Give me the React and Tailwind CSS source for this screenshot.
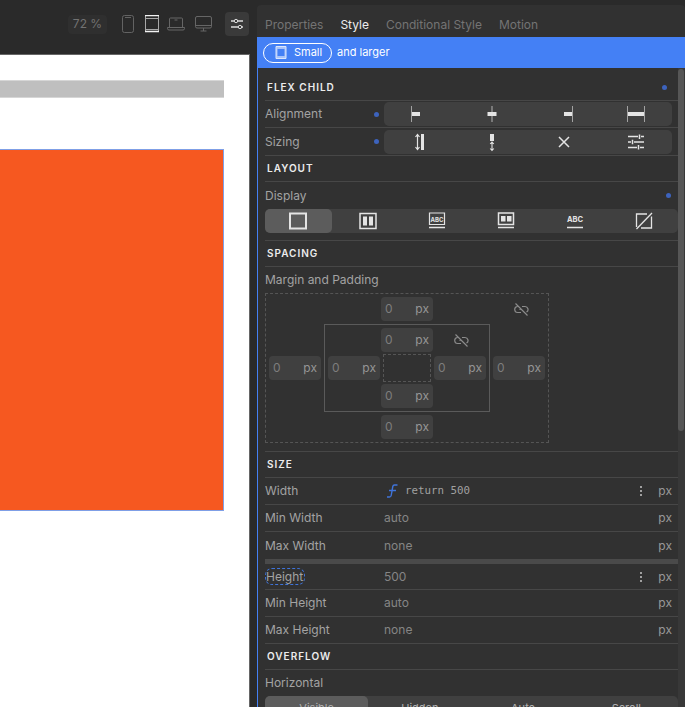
const Svg = ({ w = 20, h = 20, children, className = 'text-[#e4e4e4]' }) => (
  <svg width={w} height={h} viewBox={`0 0 ${w} ${h}`} fill="none" stroke="currentColor" className={className}>
    {children}
  </svg>
);

const alignIcons = [
  <Svg><path d="M1.500 2v16" strokeOpacity=".6" /><path d="M2 8h8v4H2z" fill="currentColor" stroke="none" /></Svg>,
  <Svg><path d="M10 2v16" strokeOpacity=".7" /><path d="M5.500 8h9v4h-9z" fill="currentColor" stroke="none" /></Svg>,
  <Svg><path d="M18.500 2v16" strokeOpacity=".6" /><path d="M10 8h8v4h-8z" fill="currentColor" stroke="none" /></Svg>,
  <Svg><path d="M1.500 2v16M18.500 2v16" strokeOpacity=".6" /><path d="M2 8h16v4H2z" fill="currentColor" stroke="none" /></Svg>,
];

const sizingIcons = [
  <Svg><path d="M7.500 2.500v15M5.500 5l2-2.500L9.500 5M5.500 15l2 2.500 2-2.500" strokeWidth="1.200" /><path d="M11 2h3v16h-3z" fill="currentColor" stroke="none" /></Svg>,
  <Svg><path d="M8 2h4v7h-4z" fill="currentColor" stroke="none" /><path d="M10 10v8.500M8.200 12L10 10l1.800 2M8.200 16.500l1.800 2 1.800-2" strokeWidth="1.100" /></Svg>,
  <Svg><path d="M5 5l10 10M15 5L5 15" strokeWidth="1.500" /></Svg>,
  <Svg><path d="M2 4.500h10M15 4.500h3M2 10h3M8 10h10M2 15.500h9M14 15.500h4M13.500 2.500v4.500M6.500 7.700v4.600M12.500 13v4.500" strokeWidth="1.500" /></Svg>,
];

const displayIcons = [
  <Svg w={18} h={18}><path d="M1 1.500h16v15H1z" strokeWidth="2" /></Svg>,
  <Svg w={18} h={18}><path d="M1 1.500h16v15H1z" strokeWidth="1.500" /><path d="M4 4.500h4v9H4zM10 4.500h4v9h-4z" fill="currentColor" stroke="none" /></Svg>,
  <Svg w={18} h={18}><path d="M1.500 1h15v11.500h-15z" strokeWidth="1.200" /><path d="M1 15.500h16" strokeWidth="1.500" /><text x="9" y="9.500" textAnchor="middle" fontSize="6" fontWeight="700" fill="currentColor" stroke="none" fontFamily="Inter">ABC</text></Svg>,
  <Svg w={18} h={18}><path d="M1.500 1h15v11.500h-15z" strokeWidth="1.500" /><path d="M4 4h4.500v5.500H4zM10 4h4.500v5.500H10z" fill="currentColor" stroke="none" /><path d="M1 15.500h16" strokeWidth="1.500" /></Svg>,
  <Svg w={18} h={18}><path d="M1 15.500h16" strokeWidth="1.500" /><text x="9" y="10" textAnchor="middle" fontSize="7.500" fontWeight="700" fill="currentColor" stroke="none" fontFamily="Inter">ABC</text></Svg>,
  <Svg w={18} h={18}><path d="M12 2H1.500v13M6 16h10.500V4.500" strokeWidth="1.300" /><path d="M1.500 17L17 1" strokeWidth="1.300" /></Svg>,
];

function Dot({ className = '' }) {
  return <span className={`w-[5px] h-[5px] rounded-full bg-[#3d63bd] shrink-0 ${className}`} />;
}

function Heading({ title, dot, className = 'h-[26px]' }) {
  return (
    <div className={`${className} flex items-center justify-between pl-[2px] pr-[11px] border-b border-[#474747]`}>
      <span className="text-[10px] font-semibold tracking-[0.1em] text-[#ececec]">{title}</span>
      {dot && <Dot />}
    </div>
  );
}

function IconRow({ label, icons, className = 'h-[27px]' }) {
  return (
    <div className={`${className} flex items-center border-b border-[#474747]`}>
      <span className="w-[109px] text-[12px] text-[#a3a3a3]">{label}</span>
      <Dot className="mr-[5px]" />
      <div className="w-[288px] h-[24px] grid grid-cols-4 bg-[#404040] rounded-[5px]">
        {icons.map((icon, i) => (
          <div key={i} className="flex items-center justify-center">{icon}</div>
        ))}
      </div>
    </div>
  );
}

function SizeRow({ label, value, menu, border = true, className = 'h-[27px]', labelClass = '', children }) {
  return (
    <div className={`${className} flex items-center text-[12px] ${border ? 'border-b border-[#474747]' : ''}`}>
      <span className="w-[119px] shrink-0"><span className={`text-[#a3a3a3] ${labelClass}`}>{label}</span></span>
      <div className="flex-1 text-[#858585]">{children || value}</div>
      {menu && (
        <span className="flex flex-col gap-[2px] mr-[16px]">
          <i className="w-[2px] h-[2px] bg-[#a0a0a0]" />
          <i className="w-[2px] h-[2px] bg-[#a0a0a0]" />
          <i className="w-[2px] h-[2px] bg-[#a0a0a0]" />
        </span>
      )}
      <span className="text-[#999] mr-[6px]">px</span>
    </div>
  );
}

function PxInput() {
  return (
    <div className="w-[52px] h-[24px] shrink-0 bg-[#404040] rounded-[4px] flex items-center justify-between px-[4px] text-[12px]">
      <span className="text-[#7d7d7d]">0</span>
      <span className="text-[#969696]">px</span>
    </div>
  );
}

const LinkOff = () => (
  <svg width="15" height="13" viewBox="0 0 15 13" fill="none" stroke="#8c8c8c" strokeWidth="1.200">
    <path d="M1.500.5l12 12M3.500 3.500a3 3 0 00.500 6h3M8 3.500h3a3 3 0 011.500 5.600M5.500 6.500h1" />
  </svg>
);

export default function App() {
  return (
    <div className="w-[685px] h-[707px] flex overflow-hidden bg-[#2a2a2a] font-[Inter,sans-serif]">
      <div className="w-[257px] shrink-0 flex flex-col">
        <div className="h-[54px] shrink-0 flex items-center pl-[68px] pr-[8px] pb-[6px]">
          <div className="w-[39px] h-[19px] rounded-[4px] bg-[#2f2f2f] text-[#727272] text-[12px] flex items-center justify-center">72 %</div>
          <div className="ml-[15px]">
            <Svg w={12} h={18} className="text-[#636363]"><rect x=".5" y=".5" width="11" height="17" rx="2" /><path d="M3 2.500h6" /></Svg>
          </div>
          <div className="ml-[11px]">
            <Svg w={14} h={18} className="text-[#a8a8a8]"><path d="M.5 1v16M13.500 1v16M1 3.500h12M1 14.500h12" /><path d="M0 .5h14M0 16.500h14" stroke="#f2f2f2" strokeWidth="1.300" /></Svg>
          </div>
          <div className="ml-[8px]">
            <Svg w={18} h={14} className="text-[#666]"><path d="M2.500 10V2a1 1 0 011-1h11a1 1 0 011 1v8" /><path d="M.5 10.500h17v1a1.500 1.500 0 01-1.500 1.500H2a1.500 1.500 0 01-1.500-1.500z" /><path d="M7.500 3h3" /></Svg>
          </div>
          <div className="ml-[10px]">
            <Svg w={17} h={16} className="text-[#666]"><rect x=".5" y=".5" width="16" height="11.500" rx="1.500" /><path d="M.5 9.500h16M8.500 12v3M5.500 15h6" /></Svg>
          </div>
          <div className="ml-[13px] w-[24px] h-[24px] rounded-[4px] bg-[#3a3a3a] flex items-center justify-center">
            <Svg w={14} h={14} className="text-[#dcdcdc]"><path d="M1 4h3M8 4h5M1 10h7M12 10h1" strokeWidth="1.300" /><circle cx="6" cy="4" r="1.700" /><circle cx="10" cy="10" r="1.700" /></Svg>
          </div>
        </div>
        <div className="w-[250px] flex-1 bg-white border-t border-r border-[#666] pt-[25px] pr-[25px]">
          <div className="h-[18px] bg-[#bfbfbf] border-y border-[#d6d6d6]" />
          <div className="mt-[51px] h-[362px] bg-[#f65820] border border-l-0 border-[#7f9fe6]" />
        </div>
      </div>

      <div className="mt-[5px] w-[428px] shrink-0 bg-[#313131] rounded-t-[4px] flex flex-col">
        <div className="h-[32px] shrink-0 flex items-center gap-[17px] pl-[8px] pt-[7px] text-[12px] text-[#747474]">
          <span>Properties</span>
          <span className="text-[#ededed]">Style</span>
          <span>Conditional Style</span>
          <span>Motion</span>
        </div>
        <div className="h-[31px] shrink-0 bg-[#4480f5] flex items-center pl-[6px] text-white text-[11px]">
          <div className="w-[69px] h-[20px] rounded-full border border-white flex items-center pl-[11px] gap-[7px]">
            <Svg w={12} h={13} className="text-[#dbe6fd]"><path d="M1 .5h10v12H1z" fill="#a9c4fa" /><path d="M2.500 3h7v7h-7z" fill="#4480f5" stroke="none" /></Svg>
            <span>Small</span>
          </div>
          <span className="ml-[5px]">and larger</span>
        </div>
        <div className="flex-1 min-h-0 flex border-l border-[#4480f5] overflow-hidden">
          <div className="w-[413px] shrink-0 ml-[7px]">
            <Heading title="FLEX CHILD" dot className="h-[33px] pt-[7px]" />
            <IconRow label="Alignment" icons={alignIcons} />
            <IconRow label="Sizing" icons={sizingIcons} className="h-[28px]" />

            <Heading title="LAYOUT" />
            <div className="h-[59px] border-b border-[#474747]">
              <div className="h-[27px] flex items-center justify-between pr-[7px] text-[12px] text-[#a3a3a3]">
                <span>Display</span>
                <Dot />
              </div>
              <div className="h-[24px] grid grid-cols-6 bg-[#404040] rounded-[5px]">
                {displayIcons.map((icon, i) => (
                  <div key={i} className={`flex items-center justify-center rounded-[5px] ${i === 0 ? 'bg-[#5c5c5c] mr-[2px]' : ''}`}>{icon}</div>
                ))}
              </div>
            </div>

            <Heading title="SPACING" />
            <div className="h-[185px] border-b border-[#474747]">
              <div className="h-[26px] flex items-center text-[12px] text-[#a3a3a3]">Margin and Padding</div>
              <div className="w-[284px] h-[150px] border border-dashed border-[#555] p-[3px] grid grid-cols-[52px_166px_52px] grid-rows-[24px_88px_24px] gap-[3px]">
                <div />
                <div className="flex justify-center"><PxInput /></div>
                <div className="flex items-center justify-center pl-[4px]"><LinkOff /></div>
                <div className="flex items-center"><PxInput /></div>
                <div className="border border-[#5a5a5a] p-[3px] grid grid-cols-[52px_48px_52px] grid-rows-[24px_28px_24px] gap-x-[3px] gap-y-[2px]">
                  <div />
                  <div className="flex justify-center"><PxInput /></div>
                  <div className="flex items-center justify-center pl-[3px]"><LinkOff /></div>
                  <div className="flex items-center"><PxInput /></div>
                  <div className="border border-dashed border-[#555]" />
                  <div className="flex items-center"><PxInput /></div>
                  <div />
                  <div className="flex justify-center"><PxInput /></div>
                  <div />
                </div>
                <div className="flex items-center"><PxInput /></div>
                <div />
                <div className="flex justify-center"><PxInput /></div>
                <div />
              </div>
            </div>

            <Heading title="SIZE" />
            <SizeRow label="Width" menu>
              <span className="flex items-center gap-[7px]">
                <svg width="11" height="14" viewBox="0 0 11 14" fill="none" stroke="#3f74db" strokeWidth="1.400" className="ml-[3px]">
                  <path d="M10.500 1H7.500C6.500 1 6 1.500 5.800 2.500L4.200 11.500C4 12.500 3.500 13 2.500 13H0M2 6.500h7" />
                </svg>
                <span className="font-['DejaVu_Sans_Mono',monospace] text-[10.8px] text-[#a0a0a0]">return 500</span>
              </span>
            </SizeRow>
            <SizeRow label="Min Width" value="auto" />
            <SizeRow label="Max Width" value="none" border={false} />
            <div className="h-[5px] bg-[#4a4a4a]" />
            <SizeRow label="Height" value="500" menu className="h-[26px]" labelClass="inline-block pr-[1px] leading-[15px] border border-dashed border-[#3f74db] rounded-[7px]" />
            <SizeRow label="Min Height" value="auto" />
            <SizeRow label="Max Height" value="none" />

            <Heading title="OVERFLOW" />
            <div className="h-[26px] flex items-center text-[12px] text-[#a3a3a3]">Horizontal</div>
            <div className="h-[24px] grid grid-cols-4 bg-[#404040] rounded-[5px] text-[11px] text-[#b0b0b0]">
              {['Visible', 'Hidden', 'Auto', 'Scroll'].map((t, i) => (
                <div key={t} className={`flex items-center justify-center rounded-[5px] ${i === 0 ? 'bg-[#5c5c5c]' : ''}`}>{t}</div>
              ))}
            </div>
          </div>
          <div className="w-[7px] shrink-0 bg-[#383838]">
            <div className="h-[362px] mt-[1px] w-[6px] rounded-full bg-[#565656]" />
          </div>
        </div>
      </div>
    </div>
  );
}
